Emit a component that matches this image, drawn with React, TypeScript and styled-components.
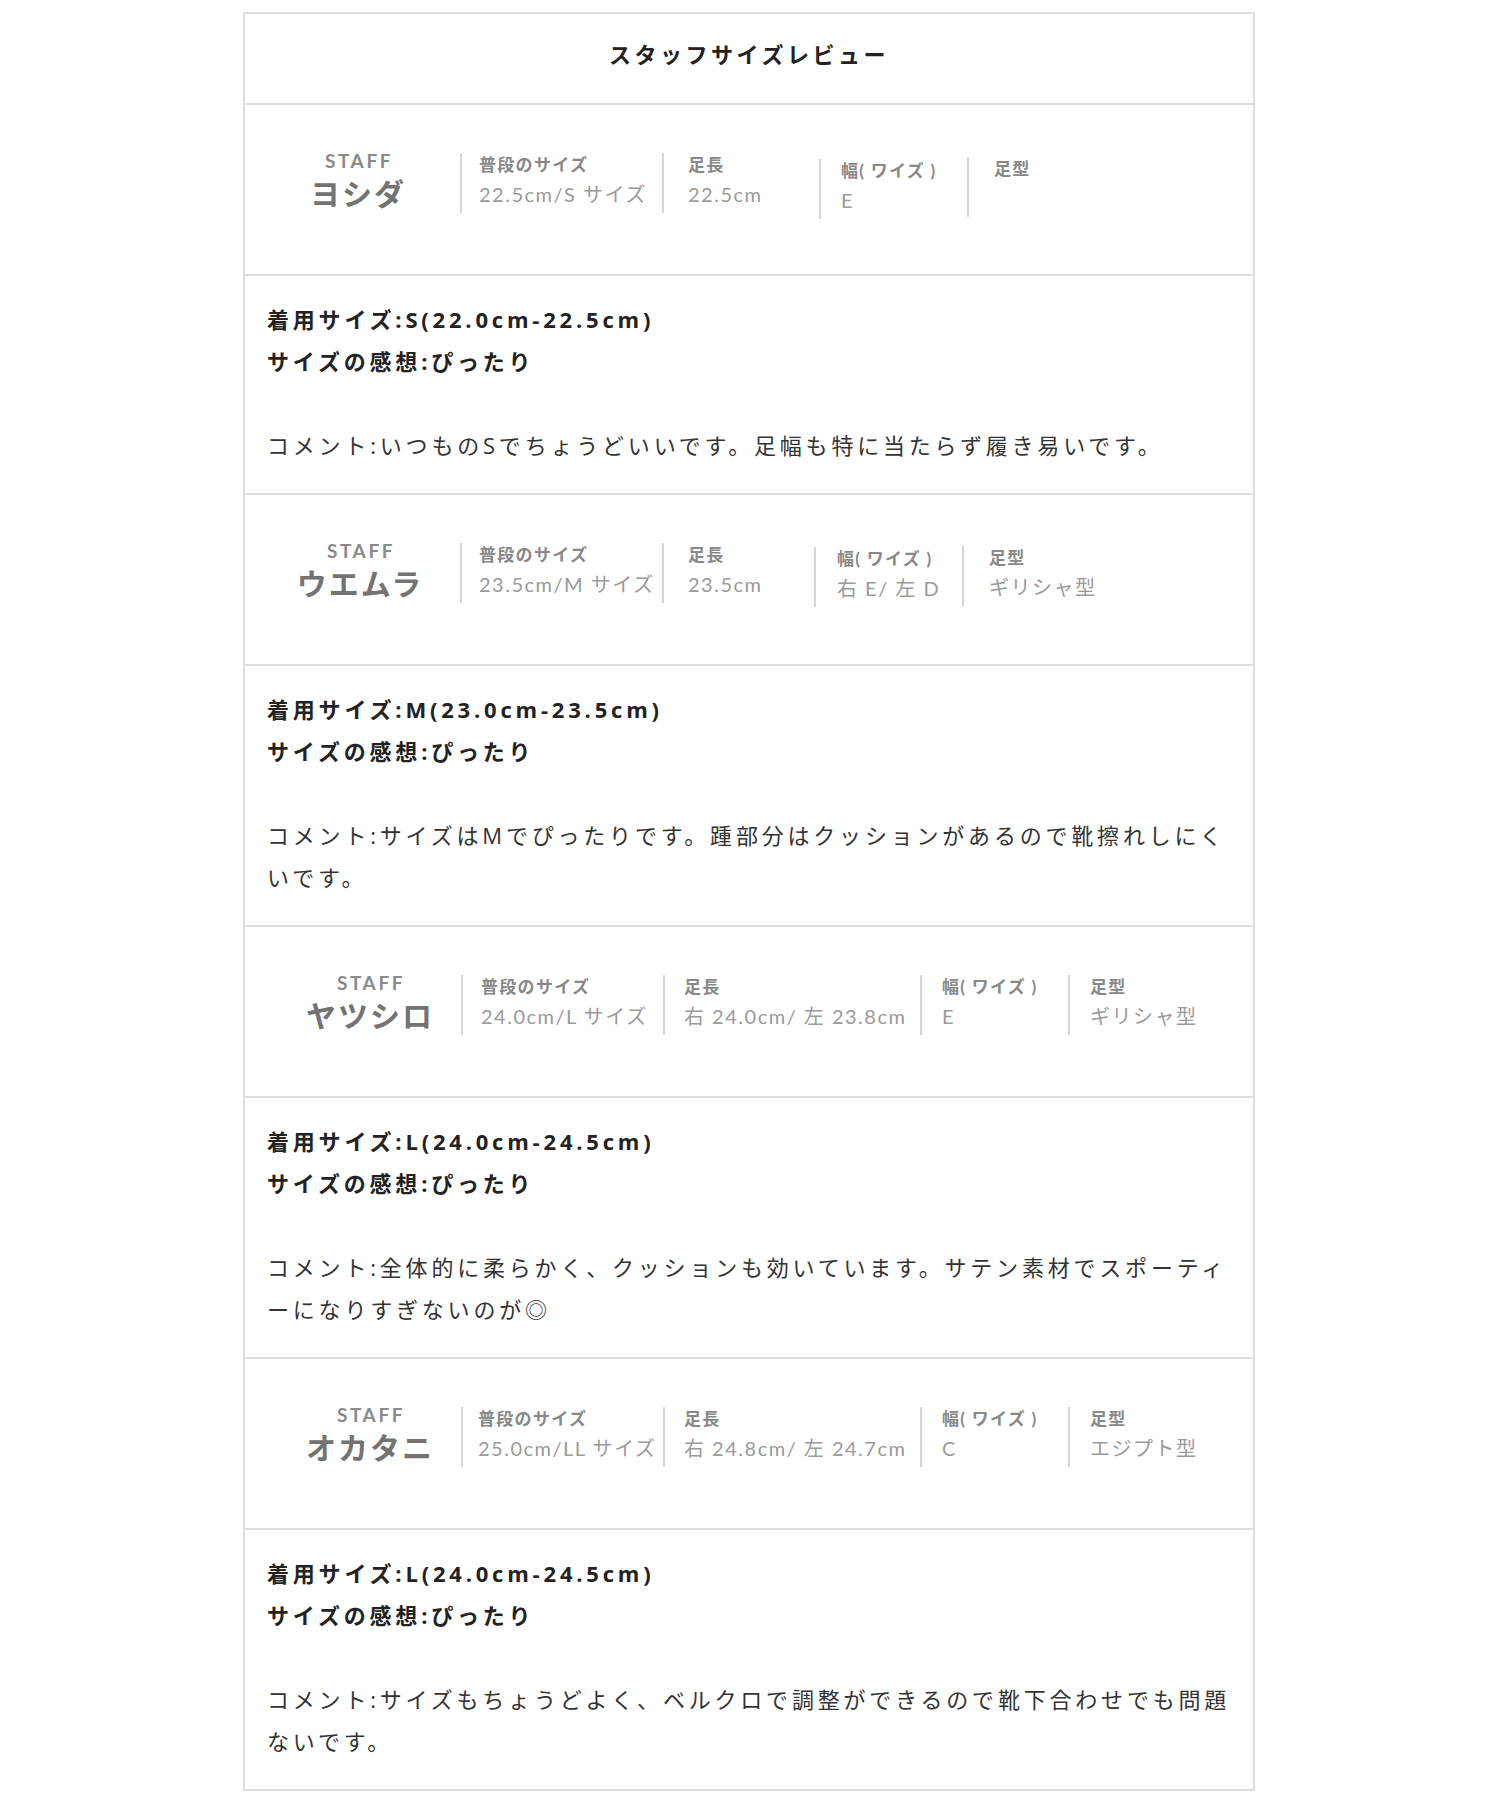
import React from "react";
import styled, { createGlobalStyle } from "styled-components";

const GlobalStyle = createGlobalStyle`
  html, body { margin: 0; padding: 0; background: #ffffff; }
  body { font-family: "Open Sans", "Noto Sans CJK JP", sans-serif; }
`;

const Board = styled.div`
  width: 1012px;
  box-sizing: border-box;
  margin: 12px 0 12px 243px;
  border: 2px solid #dedede;
  background: #fff;
`;

const Header = styled.div`
  height: 77px;
  padding-bottom: 12px;
  display: flex;
  align-items: center;
  justify-content: center;
  font-family: "Open Sans", "Noto Sans CJK JP", sans-serif;
  font-size: 22px;
  font-weight: 700;
  letter-spacing: 3.5px;
  color: #222;
`;

const StaffRow = styled.div<{ $cols: string }>`
  border-top: 2px solid #dedede;
  display: grid;
  grid-template-columns: ${(p) => p.$cols};
  align-items: start;
  align-content: start;
  padding-top: 48px;
  height: 121px;
  font-family: Lato, "Noto Sans CJK JP", sans-serif;
`;

const StaffId = styled.div<{ $pad: number }>`
  padding-left: ${(p) => p.$pad}px;
  text-align: center;
  display: flex;
  flex-direction: column;
  align-items: center;
`;

const StaffTag = styled.div`
  font-size: 19px;
  line-height: 16px;
  font-weight: 700;
  letter-spacing: 2.6px;
  color: #8a8a8a;
  padding-left: 2px;
`;

const StaffName = styled.div`
  margin-top: 6px;
  font-size: 30px;
  line-height: 34px;
  font-weight: 700;
  letter-spacing: 2px;
  color: #737373;
  font-family: "Noto Sans CJK JP", sans-serif;
`;

const InfoCell = styled.div<{ $pad: number; $shift: number }>`
  border-left: 2px solid #d6d6d6;
  height: 60px;
  margin-top: ${(p) => p.$shift}px;
  padding-left: ${(p) => p.$pad}px;
  display: flex;
  flex-direction: column;
  white-space: nowrap;
`;

const InfoLabel = styled.div`
  font-size: 17px;
  line-height: 24px;
  font-weight: 700;
  letter-spacing: 1.3px;
  color: #888;
`;

const InfoValue = styled.div`
  font-size: 20px;
  line-height: 34px;
  font-weight: 400;
  letter-spacing: 1.5px;
  color: #9a9a9a;
`;

const Detail = styled.div`
  border-top: 2px solid #dedede;
  padding: 22px 22px 27px;
  font-family: "Open Sans", "Noto Sans CJK JP", sans-serif;
  font-size: 22px;
  line-height: 42px;
  letter-spacing: 3.8px;
  line-break: normal;
  word-break: normal;
`;

const Strong = styled.div`
  font-weight: 700;
  color: #222;
`;

const Spacer = styled.div`
  height: 42px;
`;

const Comment = styled.div`
  font-weight: 400;
  color: #333;
`;

type Col = { label: string; value: string; pad: number; shift: number };
type Staff = {
  name: string;
  cols: string;
  idPad: number;
  info: Col[];
  wear: string;
  feel: string;
  comment: string;
};

const staff: Staff[] = [
  {
    name: "ヨシダ",
    cols: "215px 202px 157px 148px 1fr",
    idPad: 11,
    info: [
      { label: "普段のサイズ", value: "22.5cm/S サイズ", pad: 17, shift: 0 },
      { label: "足長", value: "22.5cm", pad: 24, shift: 0 },
      { label: "幅( ワイズ )", value: "E", pad: 20, shift: 6 },
      { label: "足型", value: "", pad: 25, shift: 4 },
    ],
    wear: "着用サイズ:S(22.0cm-22.5cm)",
    feel: "サイズの感想:ぴったり",
    comment: "コメント:いつものSでちょうどいいです。足幅も特に当たらず履き易いです。",
  },
  {
    name: "ウエムラ",
    cols: "215px 202px 152px 148px 1fr",
    idPad: 15,
    info: [
      { label: "普段のサイズ", value: "23.5cm/M サイズ", pad: 17, shift: 0 },
      { label: "足長", value: "23.5cm", pad: 24, shift: 0 },
      { label: "幅( ワイズ )", value: "右 E/ 左 D", pad: 21, shift: 4 },
      { label: "足型", value: "ギリシャ型", pad: 25, shift: 3 },
    ],
    wear: "着用サイズ:M(23.0cm-23.5cm)",
    feel: "サイズの感想:ぴったり",
    comment: "コメント:サイズはMでぴったりです。踵部分はクッションがあるので靴擦れしにくいです。",
  },
  {
    name: "ヤツシロ",
    cols: "216px 202px 257px 148px 1fr",
    idPad: 34,
    info: [
      { label: "普段のサイズ", value: "24.0cm/L サイズ", pad: 18, shift: 0 },
      { label: "足長", value: "右 24.0cm/ 左 23.8cm", pad: 19, shift: 0 },
      { label: "幅( ワイズ )", value: "E", pad: 20, shift: 0 },
      { label: "足型", value: "ギリシャ型", pad: 20, shift: 0 },
    ],
    wear: "着用サイズ:L(24.0cm-24.5cm)",
    feel: "サイズの感想:ぴったり",
    comment: "コメント:全体的に柔らかく、クッションも効いています。サテン素材でスポーティーになりすぎないのが◎",
  },
  {
    name: "オカタニ",
    cols: "216px 202px 257px 148px 1fr",
    idPad: 34,
    info: [
      { label: "普段のサイズ", value: "25.0cm/LL サイズ", pad: 15, shift: 0 },
      { label: "足長", value: "右 24.8cm/ 左 24.7cm", pad: 19, shift: 0 },
      { label: "幅( ワイズ )", value: "C", pad: 20, shift: 0 },
      { label: "足型", value: "エジプト型", pad: 20, shift: 0 },
    ],
    wear: "着用サイズ:L(24.0cm-24.5cm)",
    feel: "サイズの感想:ぴったり",
    comment: "コメント:サイズもちょうどよく、ベルクロで調整ができるので靴下合わせでも問題ないです。",
  },
];

export default function App() {
  return (
    <>
      <GlobalStyle />
      <Board>
        <Header>スタッフサイズレビュー</Header>
        {staff.map((s) => (
          <React.Fragment key={s.name}>
            <StaffRow $cols={s.cols}>
              <StaffId $pad={s.idPad}>
                <StaffTag>STAFF</StaffTag>
                <StaffName>{s.name}</StaffName>
              </StaffId>
              {s.info.map((c) => (
                <InfoCell key={c.label} $pad={c.pad} $shift={c.shift}>
                  <InfoLabel>{c.label}</InfoLabel>
                  <InfoValue>{c.value}</InfoValue>
                </InfoCell>
              ))}
            </StaffRow>
            <Detail>
              <Strong>{s.wear}</Strong>
              <Strong>{s.feel}</Strong>
              <Spacer />
              <Comment>{s.comment}</Comment>
            </Detail>
          </React.Fragment>
        ))}
      </Board>
    </>
  );
}
